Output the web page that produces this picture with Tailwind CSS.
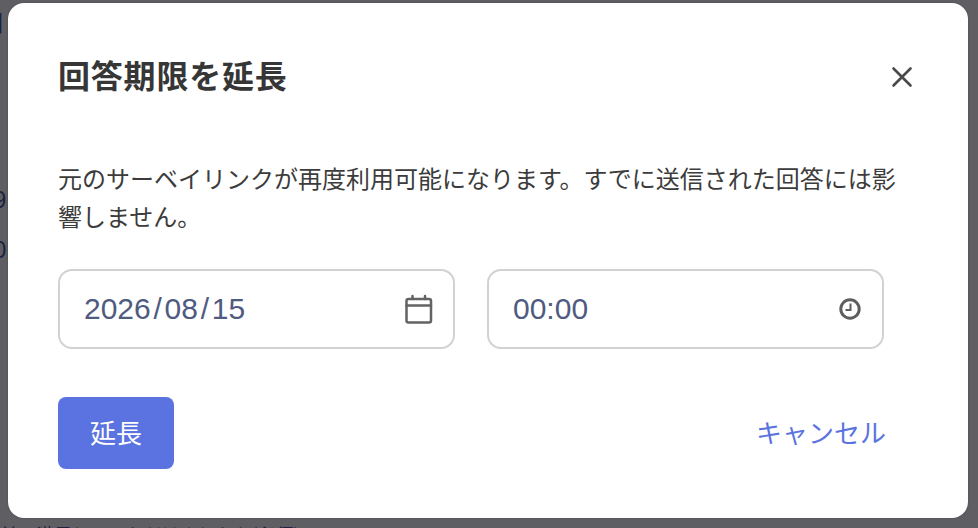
<!DOCTYPE html>
<html lang="ja">
<head>
    <meta charset="UTF-8">
    <title>回答期限を延長</title>
    <script src="https://cdn.jsdelivr.net/npm/@tailwindcss/browser@4"></script>
</head>
<body class="bg-[#5f5f63] w-[978px] h-[528px] overflow-hidden relative font-['Noto_Sans_CJK_JP',sans-serif]">
    <!-- page behind the dialog, only the edges show -->
    <div class="absolute left-[-21px] top-[4px] text-[24px] text-[#1e2340]">期</div>
    <div class="absolute left-[-7px] top-[182px] text-[24px] text-[#1e2340] font-['Liberation_Sans',sans-serif]">9</div>
    <div class="absolute left-[-7px] top-[232px] text-[24px] text-[#1e2340] font-['Liberation_Sans',sans-serif]">0</div>
    <div class="absolute left-0 top-[519px] text-[18px] leading-[30px] whitespace-nowrap text-[#1e2340]">前に満足していただけましたか(必須)</div>

    <div class="absolute left-[8px] top-[3px] w-[960px] h-[515px] bg-white rounded-[16px] shadow-[0_0_2px_rgba(0,0,0,0.25)] pl-[50px] pr-[54px] pt-[48px] flex flex-col">
        <div class="flex items-center justify-between h-[46px]">
            <h2 class="text-[32px] leading-[46px] font-bold tracking-[0.8px] text-[#363636]">回答期限を延長</h2>
            <svg class="w-[24px] h-[24px] mt-[6px]" viewBox="0 0 24 24" fill="none" stroke="#4a4a4a" stroke-width="2.6" stroke-linecap="round">
                <path d="M3.5 3.5 20.5 20.5M20.5 3.5 3.5 20.5"/>
            </svg>
        </div>

        <p class="mt-[62px] w-[850px] text-[24px] leading-[38px] text-[#3c3c3c]">元のサーベイリンクが再度利用可能になります。すでに送信された回答には影響しません。</p>

        <div class="mt-[34px] flex gap-[32px]">
            <div class="w-[397px] h-[80px] border-2 border-[#d2d2d2] rounded-[14px] pl-[24px] pr-[20px] flex items-center justify-between">
                <span class="text-[30px] leading-[34px] text-[#4f5b80] font-['Liberation_Sans',sans-serif]">2026<span class="mx-[2.75px]">/</span>08<span class="mx-[2.75px]">/</span>15</span>
                <svg class="w-[30px] h-[30px]" viewBox="0 0 30 30" fill="none" stroke="#636363" stroke-width="2.5" stroke-linejoin="round" stroke-linecap="round">
                    <rect x="3.5" y="5" width="24.5" height="23.5" rx="2"/>
                    <path d="M3.5 11.5H28M9.5 2V5M22 2V5"/>
                </svg>
            </div>
            <div class="w-[397px] h-[80px] border-2 border-[#d2d2d2] rounded-[14px] pl-[24px] pr-[21px] flex items-center justify-between">
                <span class="text-[30px] leading-[34px] text-[#4f5b80] font-['Liberation_Sans',sans-serif]">00:00</span>
                <svg class="w-[22px] h-[22px]" viewBox="0 0 22 22" fill="none" stroke="#5e5e5e" stroke-width="3">
                    <circle cx="11" cy="11" r="9.2"/>
                    <path stroke-width="2" d="M11.5 5.5V12H6.5"/>
                </svg>
            </div>
        </div>

        <div class="mt-[48px] flex items-center justify-between pr-[28px]">
            <button class="w-[116px] h-[72px] rounded-[8px] bg-[#5a73e0] text-white text-[26px] pb-[4px]">延長</button>
            <a class="text-[26px] text-[#5a73e0] mt-[-4px]">キャンセル</a>
        </div>
    </div>
</body>
</html>
